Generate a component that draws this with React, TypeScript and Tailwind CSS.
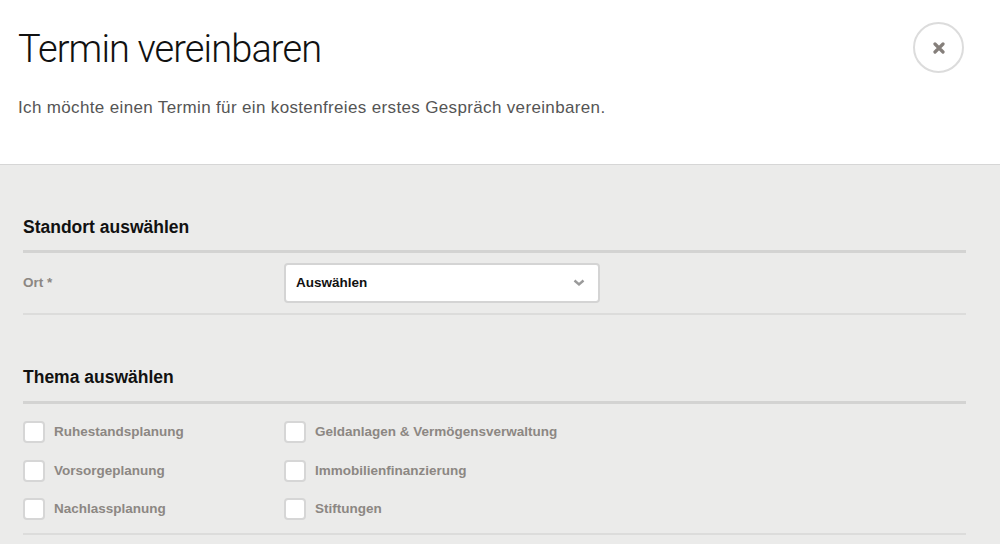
const themen = [
  "Ruhestandsplanung",
  "Geldanlagen & Vermögensverwaltung",
  "Vorsorgeplanung",
  "Immobilienfinanzierung",
  "Nachlassplanung",
  "Stiftungen",
]

function Checkbox({ label }: { label: string }) {
  return (
    <label className="flex items-center gap-[9px] h-[22px]">
      <span className="w-[22px] h-[22px] shrink-0 rounded-[4px] border-2 border-[#d6d6d6] bg-white" />
      <span className="pt-px text-[13.5px] font-bold text-[#8c8783]">{label}</span>
    </label>
  )
}

export default function App() {
  return (
    <div className="w-[1000px] h-[544px] overflow-hidden bg-[#ebebea] font-['Liberation_Sans',Arial,sans-serif]">
      {/* Header */}
      <div className="h-[165px] bg-white border-b border-[#d6d6d6] pl-[18px] pr-[36px] pt-[22px]">
        <div className="flex justify-between items-start">
          <h1 className="mt-[4px] text-[38px] leading-[46px] font-light text-[#111] font-['Roboto',sans-serif] tracking-[-0.9px]">
            Termin vereinbaren
          </h1>
          <button className="w-[51px] h-[51px] rounded-full border-2 border-[#dcdcdc] flex items-center justify-center">
            <svg width="12" height="12" viewBox="0 0 12 12">
              <path d="M2 2L10 10M10 2L2 10" stroke="#857f7b" strokeWidth="3.2" strokeLinecap="round" />
            </svg>
          </button>
        </div>
        <p className="mt-[23px] text-[17px] leading-[24px] tracking-[0.35px] text-[#555]">
          Ich möchte einen Termin für ein kostenfreies erstes Gespräch vereinbaren.
        </p>
      </div>

      {/* Form */}
      <div className="pl-[23px] pr-[34px] pt-[50px]">
        <h2 className="text-[17.5px] leading-[24px] font-bold text-[#111] pb-[11px] border-b-[3px] border-[#d3d3d2]">
          Standort auswählen
        </h2>
        <div className="grid grid-cols-[261px_316px] items-center pt-[10px] pb-[10px] border-b-2 border-[#dcdcdb]">
          <span className="text-[13.5px] font-bold text-[#8c8783]">Ort *</span>
          <div className="h-[40px] rounded-[4px] border-2 border-[#d4d4d4] bg-white flex items-center justify-between pl-[10px] pr-[13px]">
            <span className="pt-px text-[13.5px] font-bold text-[#111]">Auswählen</span>
            <svg width="12" height="8" viewBox="0 0 12 8">
              <path d="M1.5 1.5L6 5.5L10.5 1.5" fill="none" stroke="#9a9a9a" strokeWidth="2.4" />
            </svg>
          </div>
        </div>

        <h2 className="mt-[50px] text-[17.5px] leading-[24px] font-bold text-[#111] pb-[12px] border-b-[3px] border-[#d3d3d2]">
          Thema auswählen
        </h2>
        <div className="grid grid-cols-[261px_1fr] gap-y-[16.5px] pt-[17px] pb-[13px] border-b-2 border-[#dcdcdb]">
          {themen.map((t) => (
            <Checkbox key={t} label={t} />
          ))}
        </div>
      </div>
    </div>
  )
}
